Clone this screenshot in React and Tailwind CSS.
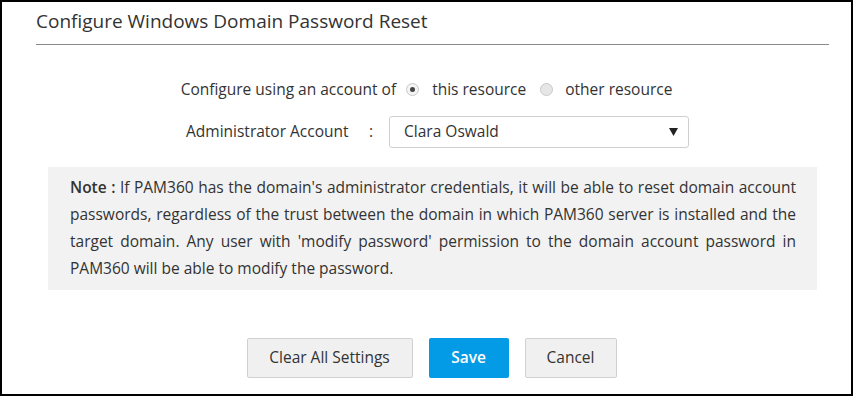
export default function App() {
  const font = { fontFamily: '"Open Sans", "Noto Sans", sans-serif' };
  return (
    <div className="w-[853px] h-[396px] border-2 border-black bg-white text-[#333]" style={font}>
      <div className="ml-[34px] mr-[22px] pt-[6px]">
        <div className="text-[19px] leading-[26px] text-[#333] pb-[10px] border-b border-[#8a8a8a]">
          Configure Windows Domain Password Reset
        </div>
      </div>
      <div className="flex items-center justify-center mt-[34px] text-[15.5px] leading-[20px]">
        <span>Configure using an account of</span>
        <span className="ml-[10px] w-[13px] h-[13px] rounded-full border border-[#c8c8c8] bg-[#f4f4f4] flex items-center justify-center">
          <span className="w-[5px] h-[5px] rounded-full bg-[#444]"></span>
        </span>
        <span className="ml-[13px]">this resource</span>
        <span className="ml-[14px] w-[13px] h-[13px] rounded-full border border-[#c8c8c8] bg-[#e6e6e6]"></span>
        <span className="ml-[12px]">other resource</span>
      </div>
      <div className="flex items-center mt-[17px] text-[15.5px]">
        <span className="ml-[184px] w-[163px] whitespace-nowrap">Administrator Account</span>
        <span className="ml-[20px]">:</span>
        <div className="ml-[16px] w-[300px] h-[32px] border border-[#cfcfcf] rounded-[3px] flex items-center justify-between pl-[14px] pr-[10px]">
          <span>Clara Oswald</span>
          <svg width="9" height="8" viewBox="0 0 9 8"><path d="M0 0 H9 L4.5 8 Z" fill="#222" /></svg>
        </div>
      </div>
      <div className="ml-[46px] mr-[34px] mt-[19px] bg-[#f2f2f2] h-[123px] pl-[22px] pr-[21px] pt-[7px] text-[15.5px] leading-[27px] text-justify text-[#333]">
        <span className="font-semibold">Note :</span> If PAM360 has the domain's administrator credentials, it will be able to reset domain account passwords, regardless of the trust between the domain in which PAM360 server is installed and the target domain. Any user with 'modify password' permission to the domain account password in PAM360 will be able to modify the password.
      </div>
      <div className="flex justify-center mt-[48px] gap-[16px] text-[15.5px] pl-[10px]">
        <button className="w-[166px] h-[40px] bg-[#f0f0f0] border border-[#d0d0d0] rounded-[2px] text-[#333]">Clear All Settings</button>
        <button className="w-[80px] h-[40px] bg-[#039be5] rounded-[2px] text-white font-semibold">Save</button>
        <button className="w-[92px] h-[40px] bg-[#f0f0f0] border border-[#d0d0d0] rounded-[2px] text-[#333]">Cancel</button>
      </div>
    </div>
  );
}
